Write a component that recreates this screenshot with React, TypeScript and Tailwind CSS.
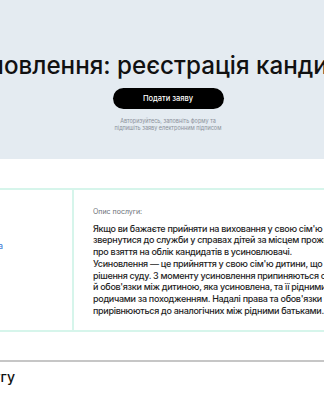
import React from 'react';

const font = { fontFamily: 'Inter, "Noto Sans", sans-serif' };

export default function App() {
  return (
    <div className="w-[324px] h-[400px] overflow-hidden bg-white" style={font}>
      <div className="w-[700px] ml-[-182px]">
        {/* Hero */}
        <section className="h-[159px] bg-[#e4ebf1] flex flex-col items-center pt-[52px]">
          <h1 className="text-[24.2px] leading-[28px] font-medium text-[#111] whitespace-nowrap">
            Усиновлення: реєстрація кандидатів
          </h1>
          <button className="mt-[8px] w-[111px] h-[21px] rounded-full bg-black text-white text-[7.5px] font-medium flex items-center justify-center">
            Подати заяву
          </button>
          <p className="mt-[9px] text-[5.5px] leading-[7px] text-[#8a9099] text-center">
            Авторизуйтесь, заповніть форму та
            <br />
            підпишіть заяву електронним підписом
          </p>
        </section>

        {/* Service info */}
        <section className="mt-[29px] flex border-y-2 border-[#d6f5eb] h-[144px]">
          <div className="w-[256px] border-r-2 border-[#d6f5eb] pt-[41px] pr-[69px] text-right">
            <span className="text-[9px] text-[#3c7bd6]">Відділ обліку та</span>
          </div>
          <div className="pl-[19px] pt-[17px]">
            <p className="text-[7px] text-[#6b7078]">Опис послуги:</p>
            <p className="mt-[5px] text-[9px] leading-[11.8px] font-medium tracking-[-0.3px] text-[#1e1e1e] whitespace-nowrap">
              Якщо ви бажаєте прийняти на виховання у свою сім'ю дитину, вам необхідно
              <br />
              звернутися до служби у справах дітей за місцем проживання із заявою
              <br />
              про взяття на облік кандидатів в усиновлювачі.
              <br />
              Усиновлення — це прийняття у свою сім'ю дитини, що здійснюється на підставі
              <br />
              рішення суду. З моменту усиновлення припиняються особисті права
              <br />
              й обов'язки між дитиною, яка усиновлена, та її рідними батьками та
              <br />
              родичами за походженням. Надалі права та обов'язки усиновлювачів
              <br />
              прирівнюються до аналогічних між рідними батьками.
            </p>
          </div>
        </section>

        {/* Next block */}
        <section className="mt-[28px] border-t-2 border-[#c6c6c6] flex">
          <div className="w-[197px] text-right pt-[4px]">
            <h2 className="text-[14px] font-medium text-[#111] whitespace-nowrap">Як отримати послугу</h2>
          </div>
        </section>
      </div>
    </div>
  );
}
